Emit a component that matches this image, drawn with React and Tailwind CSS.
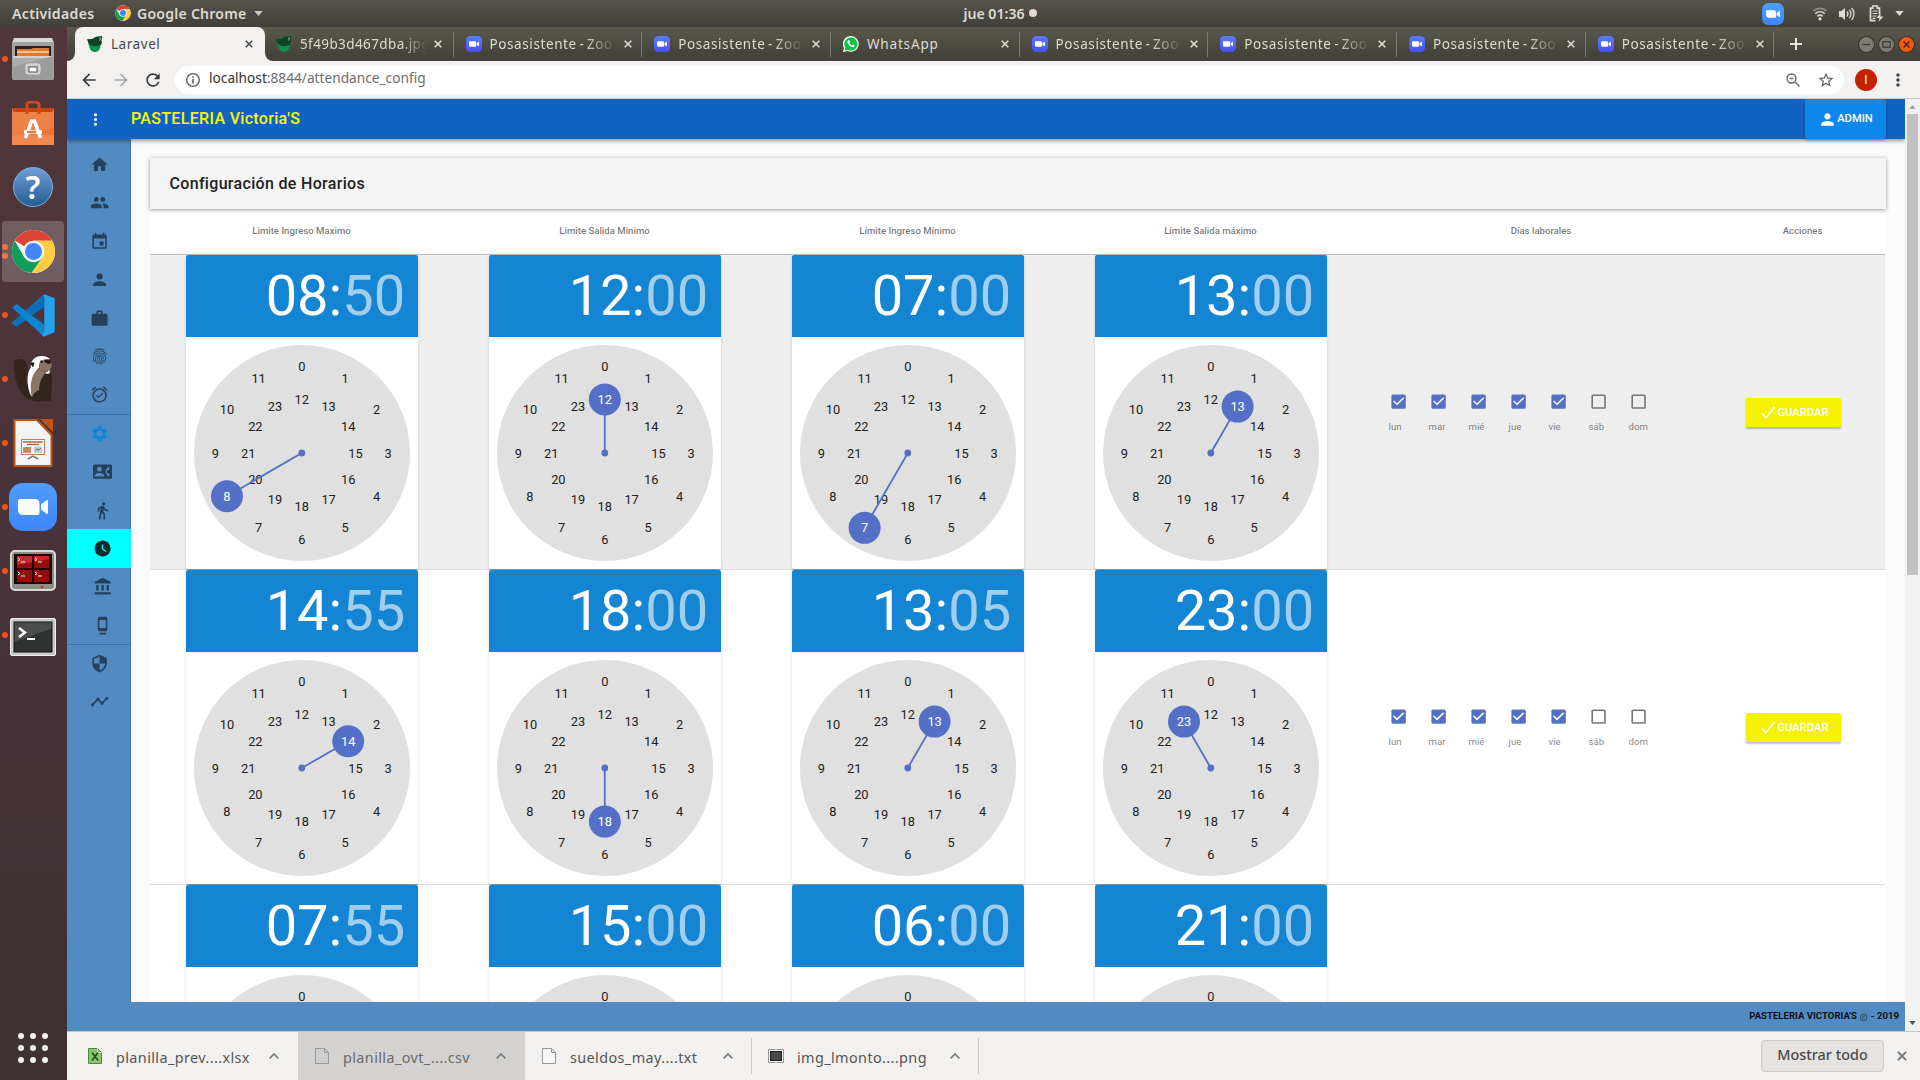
import React from "react";
import {
  MdHome, MdPeople, MdEvent, MdPerson, MdWork, MdFingerprint, MdAlarmOn, MdSettings,
  MdContactPhone, MdDirectionsWalk, MdWatchLater, MdAccountBalance, MdSecurity, MdTimeline,
  MdMoreVert, MdCheckBox, MdCheckBoxOutlineBlank, MdArrowBack, MdArrowForward, MdRefresh,
  MdStarBorder, MdCopyright,
} from "react-icons/md";

const ubuntu = "font-['Noto_Sans',sans-serif]";

function ChromeLogo({ className }) {
  return (
    <svg viewBox="0 0 48 48" className={className}>
      <circle cx="24" cy="24" r="23" fill="#fff" />
      <path d="M24 24 4.1 12.5A23 23 0 0 1 43.9 12.5H24z" fill="#db4437" />
      <path d="M4.1 12.5A23 23 0 0 0 22 46.9L34 29.8 24 24 14 29.8z" fill="#0f9d58" />
      <path d="M43.9 12.5A23 23 0 0 1 22 46.9L34 29.8V24L24 12.5z" fill="#ffcd40" />
      <circle cx="24" cy="24" r="11.5" fill="#f1f1f1" />
      <circle cx="24" cy="24" r="9" fill="#4285f4" />
    </svg>
  );
}

function ZoomLogo({ className, from = "#4f9dfb", to = "#3f86fb" }) {
  const id = "zg" + from.slice(1);
  return (
    <svg viewBox="0 0 48 48" className={className}>
      <defs>
        <linearGradient id={id} x1="0" y1="0" x2="0" y2="1">
          <stop offset="0" stopColor={from} />
          <stop offset="1" stopColor={to} />
        </linearGradient>
      </defs>
      <rect width="48" height="48" rx="14" fill={`url(#${id})`} />
      <path d="M9 18.200c0-1.200.9-2.200 2.200-2.200H26c2.500 0 4.500 2 4.500 4.500v9.300c0 1.200-.9 2.200-2.200 2.200H13.500A4.500 4.500 0 0 1 9 27.500zM32 21.600l5.500-4.300c.7-.5 1.500-.3 1.500.6v12.200c0 .9-.8 1.100-1.500.6L32 26.400z" fill="#fff" />
    </svg>
  );
}

function LaravelFavicon() {
  return (
    <svg viewBox="0 0 16 16" className="h-4 w-4 shrink-0">
      <path d="M1 6.500h13l-.8 5C12.500 14.500 10.500 16 8 16s-4.800-1.500-5.500-4.500z" fill="#0a9150" />
      <path d="M0 3.200 5 3l4-2.200 5.500-.8.800 1.500-1 3 .7 1.500-1 3-5 1.200-5-.7L1.500 7z" fill="#0c4526" />
      <path d="m12.500 1.500 1 .5-1 2.500" stroke="#cfe6d8" strokeWidth=".8" fill="none" />
    </svg>
  );
}

function WhatsAppLogo() {
  return (
    <svg viewBox="0 0 16 16" className="h-4 w-4 shrink-0">
      <path d="M0 16 .9 11.800A7.900 7.900 0 1 1 4.300 15z" fill="#fff" />
      <path d="m1.500 14.500.8-2.900A6.600 6.600 0 1 1 4.500 13.700z" fill="#0dc143" />
      <path d="M5.300 4.200c.5-.4 1-.3 1.200.2l.5 1.200c.1.300-.5.900-.6 1.100.5 1.200 1.500 2.200 2.700 2.700.3-.2.800-.9 1.100-.8l1.300.6c.4.300.2 1-.3 1.500-.6.500-1.400.6-2.200.4-2.200-.7-3.900-2.400-4.600-4.600-.1-.8.200-1.700.9-2.300z" fill="#fff" />
    </svg>
  );
}

function TopBar() {
  return (
    <div className={`grid h-[27px] shrink-0 grid-cols-3 items-center bg-linear-to-b from-[#56534b] to-[#403f3a] text-[14.100px] font-semibold text-[#dfdbd2] ${ubuntu}`}>
      <div className="flex items-center pl-3">
        <span className="w-[103px] tracking-[0.320px]">Actividades</span>
        <ChromeLogo className="h-4 w-4" />
        <span className="ml-[6px] tracking-[0.220px]">Google Chrome</span>
        <svg viewBox="0 0 10 6" className="ml-[7px] h-[5px] w-[9px]"><path d="M0 0h10L5 6z" fill="#cfccc4" /></svg>
      </div>
      <div className="flex items-center justify-center pl-[80px]">
        <span>jue 01:36</span>
        <span className="ml-1 h-2 w-2 rounded-full bg-[#dfdbd2]" />
      </div>
      <div className="flex items-center justify-end pr-[16px]">
        <ZoomLogo className="mr-[28px] h-[22px] w-[22px]" />
        <svg viewBox="0 0 16 16" className="mr-[11px] h-[15px] w-[16px]" fill="none" strokeWidth="1.700">
          <path d="M1 5.500c4-4 10-4 14 0" stroke="#8b8981" />
          <path d="M3 8.300c3-3 7-3 10 0" stroke="#dfdbd2" />
          <path d="M5.200 11c1.800-1.700 3.800-1.700 5.600 0" stroke="#dfdbd2" />
          <circle cx="8" cy="13.800" r="1.700" fill="#dfdbd2" />
        </svg>
        <svg viewBox="0 0 16 16" className="mr-[14px] h-4 w-4" fill="none" stroke="#dfdbd2" strokeWidth="1.300">
          <path d="M0 5h2.500L6 2v12l-3.500-3H0z" fill="#dfdbd2" stroke="none" />
          <path d="M8 5.500c1.200 1.500 1.200 3.500 0 5M10.300 3.800c2 2.500 2 5.900 0 8.400M12.700 2c3 3.500 3 8.500 0 12" />
        </svg>
        <svg viewBox="0 0 14 17" className="mr-[11px] h-[17px] w-[15px]" fill="none" stroke="#dfdbd2" strokeWidth="1.700">
          <path d="M6 15.700H1V3.200h2.200V1h4.600v2.200H10V9" />
          <path d="M3 6h5M3 8.500h5M3 11h4M3 13.300h3" strokeWidth="1.200" />
          <path d="M11 8 7 13h3l-1 3.800 5-5.200h-3z" fill="#dfdbd2" stroke="none" />
        </svg>
        <svg viewBox="0 0 10 6" className="h-[5px] w-[9px]"><path d="M0 0h10L5 6z" fill="#dfdbd2" /></svg>
      </div>
    </div>
  );
}

const dockIcons = {
  files: (
    <svg viewBox="0 0 44 44" className="h-[44px] w-[44px]">
      <path d="M3 1h38l2 5H1z" fill="#d8d8d8" />
      <rect x="1" y="5" width="42" height="38" rx="2" fill="#a3a3a3" />
      <rect x="4" y="9" width="36" height="11" fill="#2a2220" />
      <path d="M6 12h14l2-1h16v10H6z" fill="#e2792f" /><path d="M6 15h32" stroke="#f7d9bd" strokeWidth="1.500" />
      <path d="M2 19h40v24H2z" fill="#adadad" /><path d="M2 19h40v2H2z" fill="#d2d2d2" />
      <path d="M2 43V30L42 19v24z" fill="#9c9c9c" />
      <rect x="15" y="27" width="14" height="10" rx="2" fill="#c9c9c9" stroke="#e4e4e4" />
      <rect x="18" y="30" width="8" height="5" fill="#fff" stroke="#555" />
    </svg>
  ),
  software: (
    <svg viewBox="0 0 44 44" className="h-[44px] w-[44px]">
      <path d="M1 7h42v37H1z" fill="#ec7639" /><path d="M1 7h42l-2 4H3z" fill="#c6420f" />
      <path d="M1 11h42v15L1 40z" fill="#ee8148" /><path d="M1 34h42v10H1z" fill="#f0894f" />
      <path d="M16 13V4a3 3 0 0 1 3-3h6a3 3 0 0 1 3 3v9" fill="none" stroke="#cf4a17" strokeWidth="3" />
      <path d="M14.500 37 20.500 20h3L29.500 37M13 31h18" fill="none" stroke="#fff" strokeWidth="3.600" />
      <path d="M16 31h9" stroke="#e8682a" strokeWidth="1.800" />
    </svg>
  ),
  help: (
    <div className="flex h-10 w-10 items-center justify-center rounded-full border border-[#7fb0da] bg-linear-to-b from-[#6e9ed6] to-[#235f93] font-['Noto_Sans',sans-serif] text-[32px] font-semibold leading-none text-white">?</div>
  ),
  chrome: <ChromeLogo className="h-[45px] w-[45px]" />,
  vscode: (
    <svg viewBox="35 41 128 128" className="h-[43px] w-[43px]">
      <path d="M36 130 48 139 130 80V41L36 124z" fill="#0a70b8" />
      <path d="M36 82 48 71 130 131V168z" fill="#0c86d2" />
      <path d="M129 41 162 54V155L129 168 124 162 131 152V56z" fill="#25a2ee" />
    </svg>
  ),
  dbeaver: (
    <svg viewBox="40 227 122 142" className="h-[47px] w-[41px]">
      <path d="M45 240c9-7 36-7 38 18 1 26-6 46 8 66 12 16 26 20 36 26l-4 15c-42 2-66-26-76-68-5-22-8-48-2-57z" fill="#34251f" />
      <path d="M108 275h44c8 22 5 50 1 74 3 4 3 10 0 13h-40c-14-20-22-60-5-87z" fill="#33241e" />
      <path d="M100 262c-20 20-20 58-8 86l6 2c4-12 12-16 20-20 0-22 8-42 22-54z" fill="#8b7665" />
      <path d="M93 262c-2-24 14-35 34-35 10 0 20 4 24 10l-30 4-4 22c-22 18-28 48-22 86-16-32-16-68-2-87z" fill="#fff" />
      <path d="M120 248c4-12 18-12 28-10 9 3 9 13 6 25l-10 12-26-6z" fill="#8b7665" />
      <path d="M92 252c0-6 6-8 12-4l-4 14zM134 238h16l6 8-8 6-14-6z" fill="#241a17" />
      <circle cx="126" cy="245" r="3" fill="#111" />
      <path d="M138 278h8l3-7" stroke="#fff" strokeWidth="6" fill="none" />
    </svg>
  ),
  impress: (
    <svg viewBox="0 0 40 48" className="h-[48px] w-[40px]">
      <path d="M1.500 1H24L38.500 16v31h-37z" fill="#f3f3f3" stroke="#bb5518" strokeWidth="2" />
      <path d="M27 0h13v13z" fill="#c2540f" />
      <rect x="8.500" y="20.500" width="23" height="15" fill="#fff" stroke="#c87a4a" />
      <path d="M10 23h20M14 25.500h12" stroke="#c06030" strokeWidth="1.300" />
      <path d="M10 28h8v6h-8z" fill="#d8845a" /><path d="M21 27.500h8v6.500h-8z" fill="#c9c9c9" />
      <path d="m22 32 2-2 2 1 2-2" stroke="#3a9a3a" fill="none" />
      <path d="M15 40l5-3 5 3" stroke="#777" strokeWidth="1.500" fill="none" />
    </svg>
  ),
  zoom: <ZoomLogo className="h-12 w-12" />,
  terminator: (
    <svg viewBox="0 0 46 42" className="h-[42px] w-[46px]">
      <rect x="1" y="1" width="44" height="39" rx="4" fill="#8d8e88" stroke="#d9dad6" strokeWidth="2" />
      <rect x="4" y="4" width="38" height="30" fill="#210505" />
      <path d="M7 6h15v12H7zM24 6h15v12H24zM7 20h15v12H7zM24 20h15v12H24z" fill="#950d0d" />
      <path d="M7 6h15v6L7 15zM24 6h15v3l-15 3z" fill="#c52a2a" />
      <path d="m8 8 2 1.500L8 11M11 12h4M25 8l2 1.500-2 1.500M28 12h4M8 22l2 1.500L8 25M11 26h4M25 22l2 1.500-2 1.500M28 26h4" stroke="#eee" fill="none" />
      <circle cx="32" cy="37" r="1.300" fill="#e22" />
    </svg>
  ),
  terminal: (
    <svg viewBox="0 0 46 38" className="mt-1 h-[38px] w-[46px]">
      <rect x=".5" y=".5" width="45" height="37" rx="1.500" fill="#c9c9c9" stroke="#eee" />
      <rect x="4" y="4" width="38" height="30" fill="#2f3231" stroke="#111" />
      <path d="M4.500 4.500h37v6L4.500 24z" fill="#4a4d4b" />
      <path d="m9 10 6 4.500L9 19" stroke="#fff" strokeWidth="2.500" fill="none" /><path d="M17 21h8" stroke="#fff" strokeWidth="2" />
    </svg>
  ),
};

const dock = [
  ["files", 1], ["software", 0], ["help", 0], ["chrome", 2], ["vscode", 1], ["dbeaver", 1],
  ["impress", 1], ["zoom", 1], ["terminator", 1], ["terminal", 1],
];

function Dock() {
  return (
    <div className="flex w-[67px] shrink-0 flex-col bg-linear-to-b from-[#50373b] via-[#48333a] to-[#3f3133]">
      {dock.map(([name, dots]) => (
        <div key={name} className="flex h-16 items-center">
          <div className="flex w-[9px] flex-col items-center gap-[3px]">
            {dots > 0 && <span className="h-[6px] w-[6px] rounded-full bg-[#e95420]" />}
            {dots > 1 && <span className="h-[6px] w-[6px] rounded-full bg-[#e95420]" />}
          </div>
          <div className={name === "chrome" ? "-ml-[7px] flex h-[61px] w-[62px] items-center justify-center rounded-[4px] bg-white/20" : "-ml-[7px] flex h-[61px] w-[62px] items-center justify-center"}>
            {dockIcons[name]}
          </div>
        </div>
      ))}
      <div className="mb-[17px] ml-[18px] mt-auto grid w-[30px] grid-cols-3 gap-[6px]">
        {Array.from({ length: 9 }, (_, i) => <span key={i} className="h-[6px] w-[6px] rounded-full bg-[#f2f0ee]" />)}
      </div>
    </div>
  );
}

function CloseX({ className }) {
  return <svg viewBox="0 0 8 8" className={className}><path d="M.7.7 7.300 7.300M7.300.7.7 7.300" stroke="currentColor" strokeWidth="1.600" /></svg>;
}

const tabs = ["5f49b3d467dba.jpg", "Posasistente - Zoo", "Posasistente - Zoo", "WhatsApp", "Posasistente - Zoo", "Posasistente - Zoo", "Posasistente - Zoo", "Posasistente - Zoo"];

function TabStrip() {
  return (
    <div className={`flex h-[34px] items-center bg-linear-to-b from-[#5a594c] to-[#403f39] text-[13.500px] ${ubuntu}`}>
      <svg viewBox="0 0 8 8" className="h-2 w-2 shrink-0 self-end"><path d="M8 0v8H0A8 8 0 0 0 8 0z" fill="#f2f1f0" /></svg>
      <div className="flex h-full w-[190px] shrink-0 items-center rounded-t-[8px] bg-[#f2f1f0] pl-3 pr-3 text-[#4a4a4a]">
        <LaravelFavicon />
        <span className="ml-2 flex-1 tracking-[0.550px]">Laravel</span>
        <CloseX className="h-2 w-2" />
      </div>
      <svg viewBox="0 0 8 8" className="-mr-2 h-2 w-2 shrink-0 self-end"><path d="M0 0v8h8A8 8 0 0 1 0 0z" fill="#f2f1f0" /></svg>
      {tabs.map((t, i) => (
        <div key={i} className={i === 0 ? "flex h-[25px] w-[188.500px] shrink-0 items-center border-r border-[#7b7a71] pl-[11px] text-[#dfdbd2]" : "flex h-[25px] w-[188.700px] shrink-0 items-center border-r border-[#7b7a71] pl-[12px] text-[#dfdbd2]"}>
          {i === 0 ? <LaravelFavicon /> : t === "WhatsApp" ? <WhatsAppLogo /> : <ZoomLogo className="h-4 w-4 shrink-0" from="#5a7bfb" to="#4a4ff8" />}
          <span className={
            i === 0 ? "ml-2 w-[127px] shrink-0 overflow-hidden whitespace-nowrap mask-r-from-80% mask-r-to-100% tracking-[0.400px]"
              : t === "WhatsApp" ? "ml-2 w-[127px] shrink-0 whitespace-nowrap tracking-[0.850px]"
              : "ml-2 w-[127px] shrink-0 overflow-hidden whitespace-nowrap mask-r-from-75% mask-r-to-100% tracking-[0.600px] [word-spacing:-1.500px]"
          }>{t}</span>
          <CloseX className="ml-[7px] h-2 w-2 shrink-0" />
        </div>
      ))}
      <svg viewBox="0 0 12 12" className="ml-[16px] h-3 w-3 shrink-0"><path d="M6 0v12M0 6h12" stroke="#e8e6df" strokeWidth="2" /></svg>
      <div className="ml-auto mr-[5px] flex shrink-0 gap-[3px]">
        {["min", "max", "close"].map((k) => (
          <svg key={k} viewBox="0 0 16 16" className="h-[17px] w-[17px]">
            <circle cx="8" cy="8" r="7.500" fill={k === "close" ? "#f0590f" : "#7c7b74"} stroke="#33322e" />
            {k === "min" && <path d="M4.500 8h7" stroke="#3a3935" strokeWidth="1.200" />}
            {k === "max" && <rect x="4.500" y="5.500" width="7" height="5" fill="none" stroke="#3a3935" strokeWidth="1.200" />}
            {k === "close" && <path d="m5.200 5.200 5.600 5.600M10.800 5.200l-5.600 5.600" stroke="#4d2a17" strokeWidth="1.300" />}
          </svg>
        ))}
      </div>
    </div>
  );
}

function Toolbar() {
  return (
    <div className="flex h-[38px] items-center border-b border-[#cac9c8] bg-[#f2f1f0]">
      <MdArrowBack className="ml-[12px] h-5 w-5 text-[#3c3c3c]" />
      <MdArrowForward className="ml-[12px] h-5 w-5 text-[#a9a9a9]" />
      <MdRefresh className="ml-[12px] h-5 w-5 text-[#3c3c3c]" />
      <div className={`ml-[12px] flex h-7 w-[1669px] items-center rounded-full bg-white pl-[11px] pr-[9px] text-[13.700px] text-[#6d6d6d] ${ubuntu}`}>
        <svg viewBox="0 0 14 14" className="h-[14px] w-[14px]" fill="none" stroke="#5a5a5a" strokeWidth="1.300"><circle cx="7" cy="7" r="6.300" /><path d="M7 6v4.500M7 3.300v1.500" strokeWidth="1.600" /></svg>
        <span className="-mt-[2px] ml-[9px]"><span className="text-[#333]">localhost</span>:8844/attendance_config</span>
        <svg viewBox="0 0 14 14" className="ml-auto mr-[17px] h-[14px] w-[14px]" fill="none" stroke="#666" strokeWidth="1.400"><circle cx="5.500" cy="5.500" r="4.500" /><path d="m9 9 4.500 4.500M3.500 5.500h4" /></svg>
        <MdStarBorder className="h-[18px] w-[18px] text-[#5f5f5f]" />
      </div>
      <div className="ml-[11px] flex h-[22px] w-[22px] items-center justify-center rounded-full bg-[#c52000] text-[12px] text-white font-['Roboto',sans-serif]">I</div>
      <MdMoreVert className="ml-[11px] h-5 w-5 text-[#444]" />
    </div>
  );
}

function CellphoneDock({ className }) {
  return (
    <svg viewBox="0 0 24 24" fill="currentColor" className={className}>
      <path d="M16 15H8V5h8m0-4H8c-1.110 0-2 .89-2 2v14a2 2 0 0 0 2 2h8a2 2 0 0 0 2-2V3a2 2 0 0 0-2-2M8 23h8v-2H8z" />
    </svg>
  );
}

const nav = [
  [MdHome], [MdPeople], [MdEvent], [MdPerson], [MdWork], [MdFingerprint], [MdAlarmOn],
  [MdSettings, "open"], [MdContactPhone, "sub"], [MdDirectionsWalk, "sub"], [MdWatchLater, "active"],
  [MdAccountBalance, "sub"], [CellphoneDock, "sub"], [MdSecurity, "line"], [MdTimeline],
];
const navStyle = {
  open: "shadow-[inset_0_1px_0_#3f73a8] text-[#1485d3]",
  sub: "pl-[6px] text-[#25405a]",
  active: "bg-[#00ffff] pl-[6px] text-[#0a2b2e]",
  line: "shadow-[inset_0_1px_0_#3f73a8] text-[#25405a]",
};

function Sidebar() {
  return (
    <div className="w-16 shrink-0 bg-[#518bc2] pt-[6.400px] shadow-[inset_-1px_0_0_#4379b0]">
      {nav.map(([Icon, kind], i) => (
        <div key={i} className={`flex h-[38.400px] items-center justify-center ${kind ? navStyle[kind] : "text-[#25405a]"}`}>
          <Icon className="ml-[0.600px] h-[19.200px] w-[19.200px]" />
        </div>
      ))}
    </div>
  );
}

function Dial({ hour }) {
  const C = 108;
  const point = (h) => {
    const r = h < 12 ? 86.400 : 53.600;
    const a = (h % 12) * (Math.PI / 6);
    return [C - 0.2 + r * Math.sin(a), C - r * Math.cos(a)];
  };
  const [hx, hy] = point(hour);
  return (
    <svg viewBox="0 0 216 216" className="mx-auto mt-2 block h-[216px] w-[216px] font-['Roboto',sans-serif] text-[12.800px]">
      <circle cx={C} cy={C} r={C} fill="#e0e0e0" />
      {Array.from({ length: 24 }, (_, h) => {
        if (h === hour) return null;
        const [x, y] = point(h);
        return <text key={h} x={x} y={y + 4.600} textAnchor="middle" fill="#212121">{h}</text>;
      })}
      <line x1={C - 0.2} y1={C} x2={hx} y2={hy} stroke="#5470c6" strokeWidth="1.800" />
      <circle cx={C - 0.2} cy={C} r="3.400" fill="#5470c6" />
      <circle cx={hx} cy={hy} r="16" fill="#5470c6" />
      <text x={hx} y={hy + 4.600} textAnchor="middle" fill="#fff">{hour}</text>
    </svg>
  );
}

function TimePicker({ time }) {
  const [h, m] = time.split(":");
  return (
    <div className="mx-auto h-[314px] w-[232px] rounded-[2px] bg-white shadow-[0_2px_1px_-1px_rgba(0,0,0,.2),0_1px_1px_rgba(0,0,0,.14),0_1px_3px_rgba(0,0,0,.12)]">
      <div className="flex h-[82px] items-center justify-end rounded-t-[2px] bg-[#1485d3] pr-[12.400px] text-[56px] leading-none text-white">
        <span>{h}</span><span>:</span><span className="text-white/60">{m}</span>
      </div>
      <Dial hour={Number(h)} />
    </div>
  );
}

const days = [["lun", true], ["mar", true], ["mié", true], ["jue", true], ["vie", true], ["sáb", false], ["dom", false]];
const schedules = [
  ["08:50", "12:00", "07:00", "13:00"],
  ["14:55", "18:00", "13:05", "23:00"],
  ["07:55", "15:00", "06:00", "21:00"],
];
const grid = "grid grid-cols-[303px_303px_303px_303px_358px_165px]";

function ScheduleRow({ times, shaded }) {
  return (
    <div className={`${grid} h-[315px] border-b border-[#dcdcdc] ${shaded ? "bg-[#eeeeee]" : "bg-white"}`}>
      {times.map((t, i) => <TimePicker key={i} time={t} />)}
      {times[0] !== "07:55" && (
        <>
          <div className="flex pl-[26.600px] pt-[136.600px]">
            {days.map(([d, on]) => (
              <div key={d} className="w-10 text-[9.600px] text-black/50">
                {on ? <MdCheckBox className="h-[19.200px] w-[19.200px] text-[#5470c6]" /> : <MdCheckBoxOutlineBlank className="h-[19.200px] w-[19.200px] text-[#757575]" />}
                <div className="mt-[9.400px]">{d}</div>
              </div>
            ))}
          </div>
          <div className="pl-[26px] pt-[143px]">
            <button className="flex h-[29px] w-[95px] items-center rounded-[2px] bg-[#f5f200] pl-[12.500px] text-[11.200px] font-medium text-white shadow-[0_2px_2px_rgba(0,0,0,.25)]">
              <svg viewBox="0 0 19 19" className="h-[19px] w-[19px]"><path d="m3 10.500 4 4.200L15.500 4" fill="none" stroke="#fff" strokeWidth="1.600" /></svg>
              <span className="mt-px">GUARDAR</span>
            </button>
          </div>
        </>
      )}
    </div>
  );
}

const headings = ["Limite Ingreso Maximo", "Limite Salida Minimo", "Límite Ingreso Mínimo", "Límite Salida máximo", "Días laborales", "Acciones"];

function WebApp() {
  return (
    <div className="flex h-[932px] w-[1838px] flex-col overflow-hidden font-['Roboto',sans-serif]">
      <div className="z-10 flex h-10 shrink-0 items-center bg-[#1163c3] text-[16px] font-medium shadow-[0_2px_4px_rgba(0,0,0,.4)]">
        <MdMoreVert className="ml-[19px] h-[19px] w-[19px] text-white" />
        <span className="-mt-px ml-[26px] tracking-[0.320px] text-[#f8f800]">PASTELERIA Victoria'S</span>
        <div className="ml-auto mr-[19px] flex h-10 w-[81px] items-center justify-center rounded-[2px] bg-[#0d87ec] text-[11.200px] text-white shadow-[0_1px_3px_rgba(0,0,0,.35)]">
          <MdPerson className="h-[19px] w-[19px]" />ADMIN
        </div>
      </div>
      <div className="flex min-h-0 flex-1">
        <Sidebar />
        <div className="min-w-0 flex-1 overflow-hidden bg-[#fafafa] pl-[19px] pt-[19px]">
          <div className="relative flex h-[51px] w-[1736px] items-center bg-[#f4f4f4] pl-[19.500px] text-[16px] font-medium tracking-[0.320px] text-[#212121] shadow-[0_1px_4px_rgba(0,0,0,.4)]">
            Configuración de Horarios
          </div>
          <div className="w-[1735px] bg-white">
            <div className={`${grid} h-[46px] items-center border-b border-[#bdbdbd] text-center text-[9.600px] font-medium text-black/55`}>
              {headings.map((t) => <span key={t} className="-mt-[1px]">{t}</span>)}
            </div>
            {schedules.map((times, i) => <ScheduleRow key={i} times={times} shaded={i === 0} />)}
          </div>
        </div>
      </div>
      <div className="z-10 flex h-[29px] shrink-0 items-center justify-end bg-[#518bc2] pr-[6px] text-[9.600px] font-bold text-[#111]">
        PASTELERIA VICTORIA'S <MdCopyright className="mx-[2.500px] mt-px h-[9px] w-[9px] text-[#25405a]" /> - 2019
      </div>
    </div>
  );
}

function Scrollbar() {
  return (
    <div className="flex h-full flex-1 flex-col items-center bg-[#f1f1f1]">
      <svg viewBox="0 0 8 5" className="mb-[5px] mt-[6px] h-[4px] w-[7px] shrink-0"><path d="M0 5h8L4 0z" fill="#a3a3a3" /></svg>
      <div className="h-[461px] w-[11px] bg-[#c1c1c1]" />
      <svg viewBox="0 0 8 5" className="mb-[6px] mt-auto h-[4px] w-[7px]"><path d="M0 0h8L4 5z" fill="#505050" /></svg>
    </div>
  );
}

function FileIcon({ type }) {
  if (type === "png")
    return <svg viewBox="0 0 16 14" className="h-[14px] w-4"><rect x=".5" y=".5" width="15" height="13" fill="#fff" stroke="#999" /><rect x="2.500" y="2.500" width="11" height="9" fill="#4a4a4a" stroke="#1e1e1e" /></svg>;
  const green = type === "xlsx";
  return (
    <svg viewBox="0 0 14 16" className="h-4 w-[14px]">
      <path d="M.5.5h9l4 4v11H.5z" fill={green ? "#8cc66c" : type === "csv" ? "#cfcfcf" : "#f6f6f6"} stroke={green ? "#4f8a3a" : "#989898"} />
      <path d="M9.500.5v4h4" fill="none" stroke={green ? "#dbe8d4" : "#989898"} />
      {green && <path d="m4 4.500 6 8M10 4.500l-6 8" stroke="#26551c" strokeWidth="1.800" />}
    </svg>
  );
}

const downloads = [["xlsx", "planilla_prev....xlsx"], ["csv", "planilla_ovt_....csv"], ["txt", "sueldos_may....txt"], ["png", "img_lmonto....png"]];

function Downloads() {
  return (
    <div className={`flex h-[49px] items-center border-t border-[#c6c5c4] bg-[#f2f1f0] text-[14.400px] text-[#555] ${ubuntu}`}>
      {downloads.map(([type, name], i) => (
        <div
          key={type}
          className={
            type === "csv" ? "flex h-full w-[227px] items-center bg-[#d3d2d1] pl-[16px] pr-[19px] text-[#6a6a6a]"
              : i === 0 ? "flex h-9 w-[231px] items-center pl-[20px] pr-[19px]"
              : "flex h-9 w-[227px] items-center border-r border-[#cbcac9] pl-[16px] pr-[18px]"
          }
        >
          <span className="flex w-4 justify-center"><FileIcon type={type} /></span>
          <span className="ml-[13px] mt-[3px] flex-1 tracking-[0.400px]">{name}</span>
          <svg viewBox="0 0 10 6" className="h-[6px] w-[10px]"><path d="m.7 5.400 4.300-4.400 4.300 4.400" fill="none" stroke="#777" strokeWidth="1.600" /></svg>
        </div>
      ))}
      <div className="ml-auto mr-[13px] flex h-[32px] w-[123px] items-center justify-center rounded-[4px] border border-[#cbcac8] bg-[#e4e3e2] pb-[2px] font-medium text-[#4a4a4a]">Mostrar todo</div>
      <CloseX className="mr-[13px] h-[10px] w-[10px] text-[#777]" />
    </div>
  );
}

export default function App() {
  return (
    <div className="flex h-[1080px] w-[1920px] flex-col overflow-hidden">
      <TopBar />
      <div className="flex min-h-0 flex-1">
        <Dock />
        <div className="flex w-[1853px] flex-col">
          <TabStrip />
          <Toolbar />
          <div className="flex h-[932px]">
            <WebApp />
            <Scrollbar />
          </div>
          <Downloads />
        </div>
      </div>
    </div>
  );
}
